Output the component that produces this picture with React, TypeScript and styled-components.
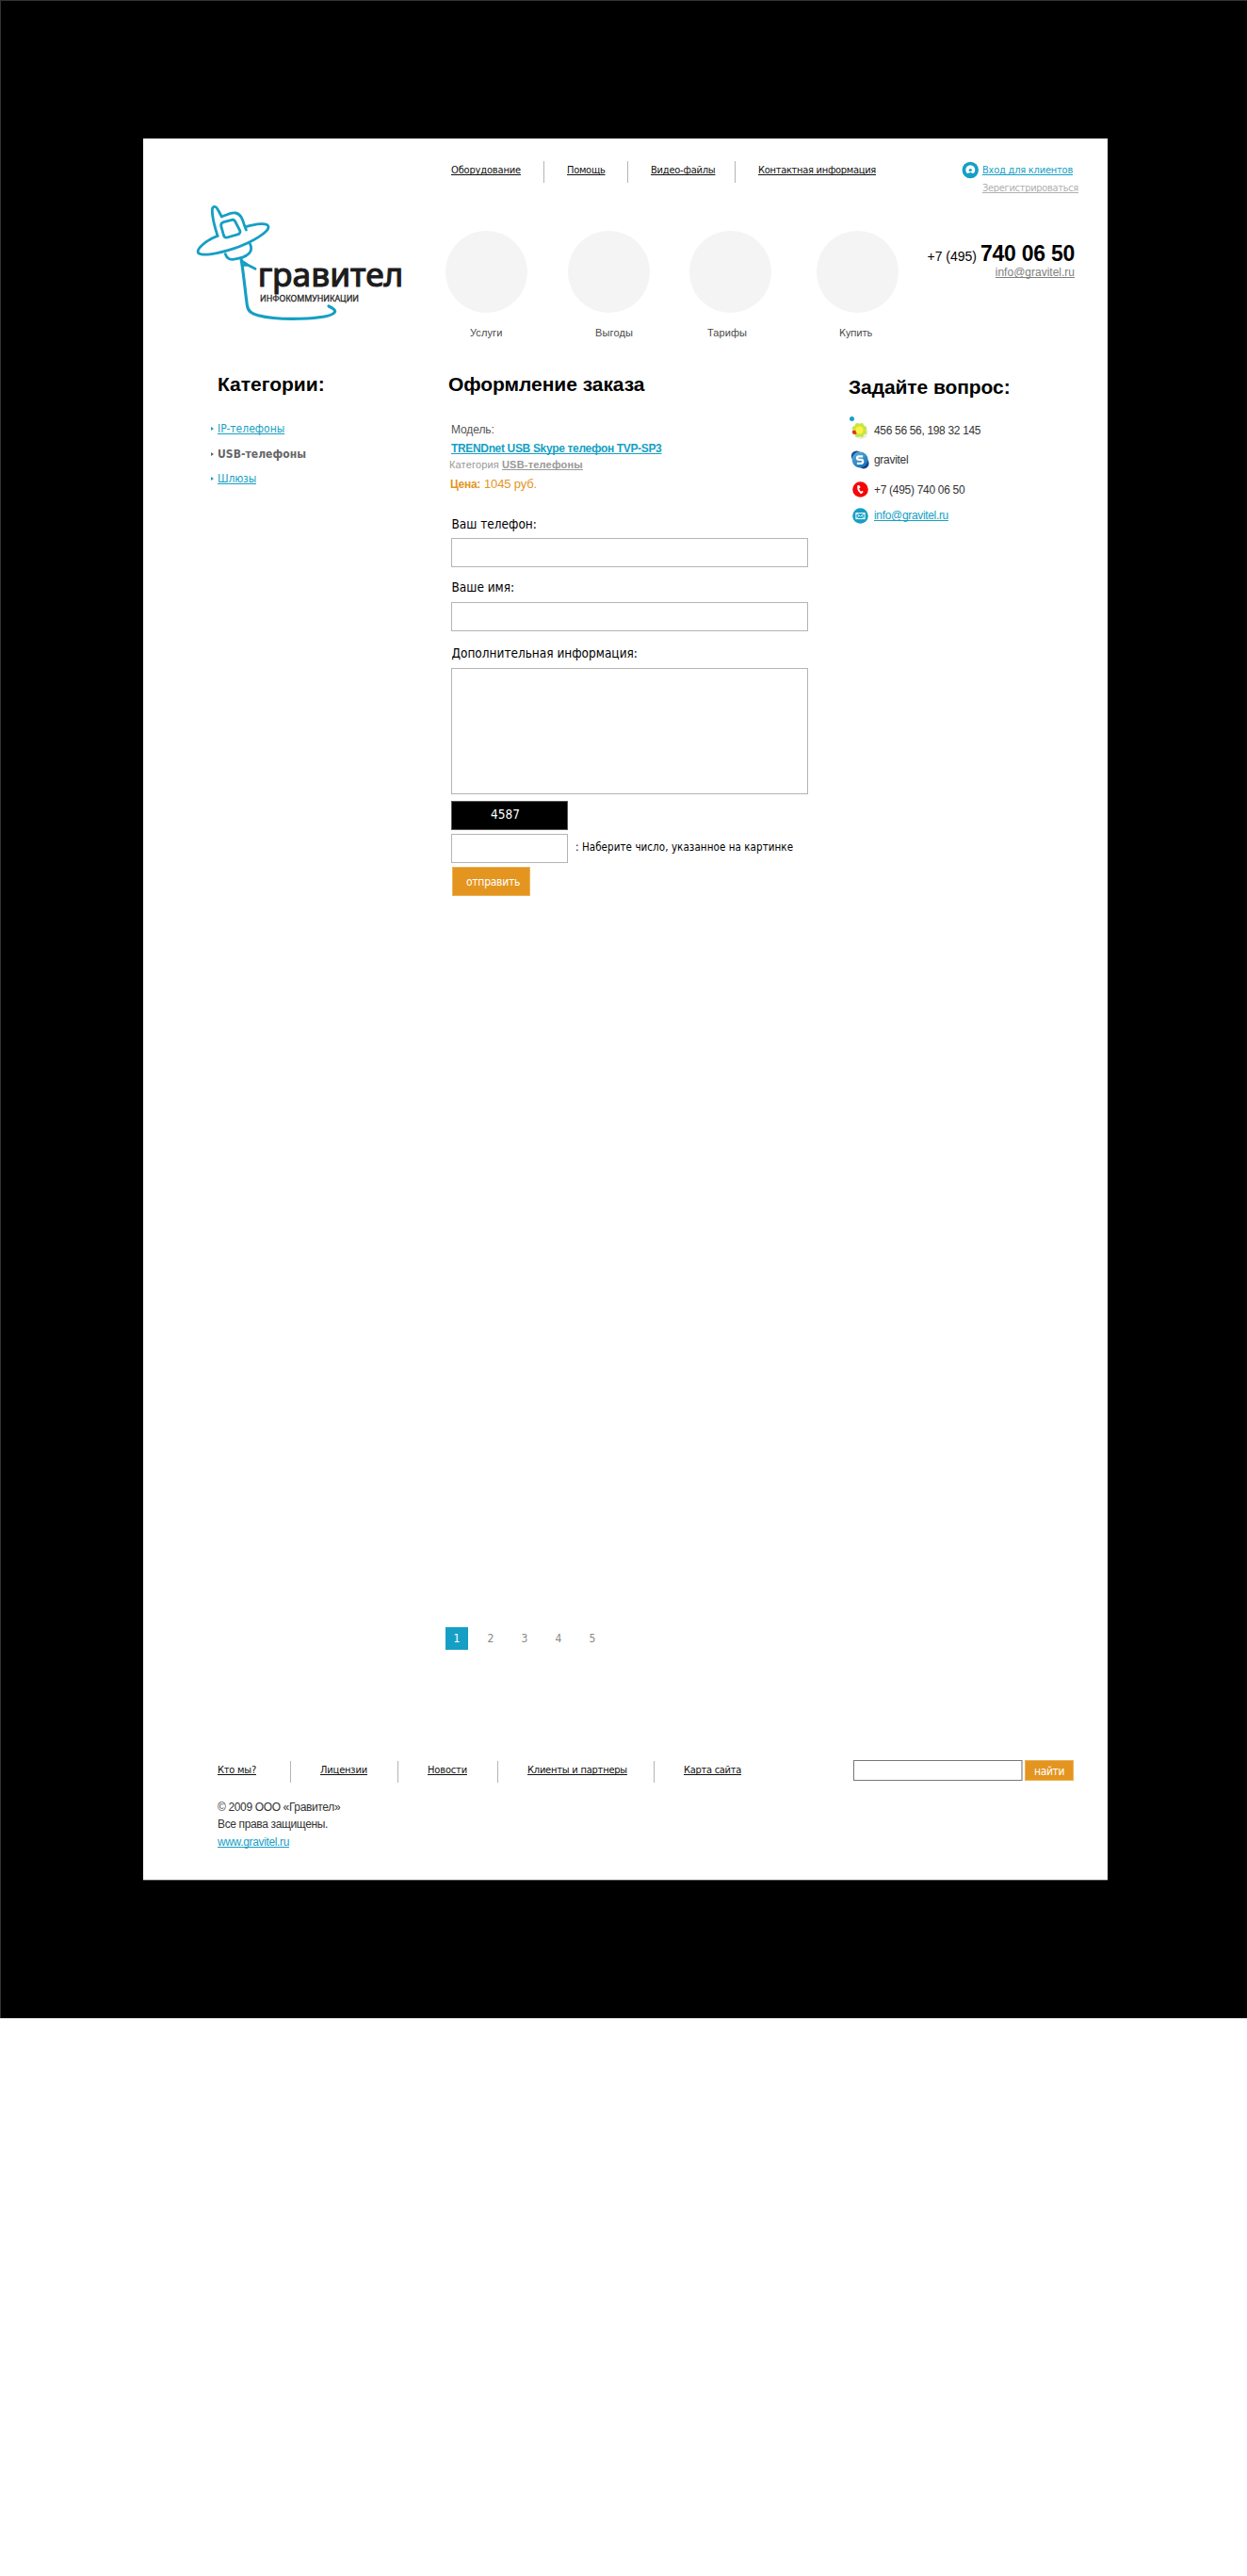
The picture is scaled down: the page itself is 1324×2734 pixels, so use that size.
import React from "react";
import styled, { createGlobalStyle } from "styled-components";

const tahoma = `Tahoma, "DejaVu Sans Condensed", "DejaVu Sans", sans-serif`;
const arial = `"Liberation Sans", Arial, sans-serif`;
const blue = "#169fc4";
const orange = "#e4951f";

const Global = createGlobalStyle`
  * { box-sizing: border-box; }
  html, body { margin: 0; padding: 0; background: #fff; }
  h2, p, ul { margin: 0; padding: 0; }
`;

const Backdrop = styled.div`
  width: 1324px;
  height: 2142px;
  padding: 146px 0 0 151px;
  background: #000;
  border: 1px solid #333;
  border-right: 0;
  border-bottom: 0;
`;

const Sheet = styled.div`
  width: 1024px;
  height: 1849px;
  background: #fff;
  border-bottom: 1px solid #555;
  font-family: ${arial};
  white-space: nowrap;
  display: flex;
  flex-direction: column;
`;

const Link = styled.a<{ $ls?: number }>`
  color: inherit;
  text-decoration: underline;
  text-decoration-thickness: 1px;
  text-underline-offset: 1px;
  text-decoration-skip-ink: none;
  letter-spacing: ${(p) => p.$ls ?? 0}px;
`;

/* ---------- top bar ---------- */

const TopBar = styled.div`
  display: flex;
  height: 62px;
  padding: 24px 0 0 327px;
  font: 11px/19px ${tahoma};
`;

const NavCell = styled.div<{ $w: number; $pad: number; $last?: boolean }>`
  width: ${(p) => p.$w}px;
  height: 23px;
  padding-left: ${(p) => p.$pad}px;
  color: #111;
  border-right: ${(p) => (p.$last ? "0" : "1px solid #b4b4b4")};
`;

const Login = styled.div`
  display: flex;
  gap: 3px;
  padding-left: 1px;
`;

const LoginLinks = styled.div`
  display: flex;
  flex-direction: column;
  color: ${blue};
`;

const Register = styled.span`
  color: #b0b0b0;
`;

/* ---------- header ---------- */

const Header = styled.div`
  display: flex;
  height: 185px;
  padding-left: 55px;
`;

const LogoSvg = styled.svg`
  display: block;
  flex: none;
  width: 225px;
  height: 130px;
  margin: 6px 41px 0 0;
  overflow: visible;
`;

const Section = styled.div<{ $gap: number }>`
  width: 87px;
  margin: 36px ${(p) => p.$gap}px 0 0;
  flex: none;
`;

const Disc = styled.div`
  height: 87px;
  border-radius: 50%;
  background: #f4f4f4;
`;

const SectionName = styled.div<{ $left: number; $ls: number; $tahoma?: boolean }>`
  margin-top: ${(p) => (p.$tahoma ? 12 : 11)}px;
  padding-left: ${(p) => p.$left}px;
  font: 11px/20px ${(p) => (p.$tahoma ? tahoma : arial)};
  letter-spacing: ${(p) => p.$ls}px;
  color: #4a4a4a;
`;

const Phone = styled.div`
  width: 157px;
  margin: 47px 0 0 30px;
  display: flex;
  flex-direction: column;
  align-items: flex-end;
`;

const PhoneLine = styled.div`
  display: flex;
  align-items: baseline;
  gap: 4px;
  height: 26px;
  font-size: 14px;
  line-height: 26px;
`;

const PhoneNumber = styled.strong`
  font-size: 23px;
  letter-spacing: -0.26px;
`;

const PhoneMail = styled.div`
  font-size: 12px;
  line-height: 15px;
  color: #808080;
`;

/* ---------- columns ---------- */

const Columns = styled.div`
  display: flex;
  height: 1333px;
`;

const Column = styled.div<{ $left: number; $w: number; $top?: number }>`
  width: ${(p) => p.$w}px;
  margin-left: ${(p) => p.$left}px;
  padding-top: ${(p) => p.$top ?? 0}px;
  flex: none;
`;

const Title = styled.h2<{ $ls: number; $indent?: number }>`
  font: bold 21px/28px ${arial};
  letter-spacing: ${(p) => p.$ls}px;
  padding-left: ${(p) => p.$indent ?? 0}px;
  color: #000;
`;

const Categories = styled.ul`
  list-style: none;
  margin-top: 20px;
`;

const Category = styled.li<{ $current?: boolean; $ls?: number }>`
  display: flex;
  align-items: center;
  gap: 4px;
  height: 26.5px;
  font: ${(p) => (p.$current ? "bold" : "normal")} 12px/26.5px ${tahoma};
  letter-spacing: ${(p) => p.$ls ?? 0}px;
  color: ${(p) => (p.$current ? "#666" : blue)};
`;

const Arrow = styled.span`
  border-left: 3px solid currentColor;
  border-top: 2px solid transparent;
  border-bottom: 2px solid transparent;
`;

const Product = styled.div`
  padding: 24px 0 0 3px;
`;

const ModelLabel = styled.div`
  font-size: 12px;
  line-height: 20px;
  letter-spacing: -0.1px;
  color: #555;
`;

const ModelName = styled.div`
  font-weight: bold;
  font-size: 12px;
  line-height: 20px;
  color: ${blue};
`;

const ModelCategory = styled.div`
  display: flex;
  gap: 3px;
  margin-left: -2px;
  font-size: 11px;
  line-height: 15px;
  height: 16px;
  letter-spacing: 0.17px;
  color: #999;
`;

const Price = styled.div`
  display: flex;
  align-items: baseline;
  gap: 4px;
  margin-left: -1px;
  height: 24px;
  font-size: 13px;
  line-height: 24px;
  letter-spacing: -0.15px;
  color: ${orange};
`;

const PriceLabel = styled.strong`
  font-size: 12px;
  letter-spacing: -0.3px;
`;

const Form = styled.form`
  width: 382px;
  padding: 20px 0 0 3px;
`;

const FieldLabel = styled.label<{ $top?: number; $gap: number }>`
  display: block;
  margin: ${(p) => p.$top ?? 0}px 0 ${(p) => p.$gap}px;
  padding-left: 0.5px;
  font: 13.5px/20px ${tahoma};
  color: #000;
`;

const Field = styled.input`
  display: block;
  width: 379px;
  height: 31px;
  padding: 0 6px;
  border: 1px solid #b4b4b4;
  background: #fff;
  border-radius: 0;
  outline: 0;
`;

const Area = styled.textarea`
  display: block;
  width: 379px;
  height: 134px;
  padding: 6px;
  border: 1px solid #b4b4b4;
  border-radius: 0;
  resize: none;
  outline: 0;
`;

const Captcha = styled.div`
  width: 124px;
  height: 31px;
  margin: 7px 0 4px;
  padding-left: 41px;
  border: 1px solid #555;
  background: #000;
  color: #fff;
  font: 13.5px/27px ${tahoma};
`;

const CaptchaRow = styled.div`
  display: flex;
  gap: 8px;
  font: 11.5px/29px ${tahoma};
  letter-spacing: 0.07px;
  color: #000;
`;

const CaptchaField = styled(Field)`
  width: 124px;
`;

const Button = styled.button<{ $w: number; $h: number; $left: number; $ls: number }>`
  display: block;
  width: ${(p) => p.$w}px;
  height: ${(p) => p.$h}px;
  padding: 1px 0 0 ${(p) => p.$left}px;
  border: 1px solid #ebb25c;
  background: ${orange};
  color: #fff;
  font: 12px/1 ${tahoma};
  letter-spacing: ${(p) => p.$ls}px;
  text-align: left;
`;

const SubmitRow = styled.div`
  padding: 4px 0 0 1px;
`;

const Contacts = styled.div`
  position: relative;
  padding: 21px 0 0 3px;
`;

const Dot = styled.span`
  position: absolute;
  left: 1px;
  top: 17px;
  width: 5px;
  height: 5px;
  border-radius: 50%;
  background: ${blue};
`;

const Contact = styled.div<{ $h: number; $ls: number }>`
  display: flex;
  align-items: center;
  height: ${(p) => p.$h}px;
  font-size: 12px;
  letter-spacing: ${(p) => p.$ls}px;
  color: #333;
`;

const ContactIcon = styled.span`
  display: flex;
  align-items: center;
  justify-content: center;
  width: 18px;
  margin-right: 6px;
  flex: none;

  svg {
    flex: none;
  }
`;

const Blue = styled.span`
  color: ${blue};
`;

/* ---------- pagination and footer ---------- */

const Pages = styled.div`
  display: flex;
  gap: 12px;
  padding-left: 321px;
  height: 142px;
`;

const Page = styled.span<{ $on?: boolean }>`
  width: 24px;
  height: 24px;
  font: 12px/25px ${tahoma};
  text-align: center;
  color: ${(p) => (p.$on ? "#fff" : "#888")};
  background: ${(p) => (p.$on ? blue : "transparent")};
`;

const Footer = styled.div`
  display: flex;
  padding-left: 79px;
  height: 23px;
  font: 11px/19px ${tahoma};
`;

const Search = styled.div`
  display: flex;
  gap: 2px;
  margin-top: -1px;
`;

const SearchField = styled.input`
  width: 180px;
  height: 22px;
  padding: 0 4px;
  border: 1px solid #777;
  border-right: 2px solid #b4b4b4;
  border-radius: 1px;
  outline: 0;
`;

const Legal = styled.div`
  padding: 17px 0 0 79px;
  font-size: 12px;
  line-height: 18.4px;
  letter-spacing: -0.36px;
  color: #333;
`;

function Logo() {
  return (
    <LogoSvg viewBox="201 240 675 390">
      <g fill="none" stroke={blue} strokeWidth="8.5" strokeLinecap="round" strokeLinejoin="round">
        <path d="M273 346C264 318 255 285 256 262C257 251 267 250 272 259C278 270 282 277 286 285C300 281 314 271 330 273C347 276 352 292 357 308L364 327" />
        <path d="M364 317C395 308 432 302 435 317C437 333 385 366 326 386C275 403 224 411 212 401C203 388 238 359 273 346" />
        <path d="M293 302L319 295Q326 293 329 300L344 329Q347 337 339 341L304 351Q296 353 293 346L284 314Q283 305 293 302Z" />
        <path d="M298 404C301 414 309 422 322 421C341 418 359 416 374 401C383 391 381 382 377 373" />
        <path d="M348 420C353 442 361 522 367 566C370 588 383 594 402 599C440 609 500 612 560 609C605 606 644 600 647 587C647 579 636 574 627 570" strokeWidth="9.5" />
        <path d="M350 426L368 438L393 451M352 440L368 438" />
      </g>
      <text x="401" y="508" fontFamily="Noto Sans, sans-serif" fontSize="106" fill="#1c1c1c" stroke="#1c1c1c" strokeWidth="3.5" textLength="464" lengthAdjust="spacingAndGlyphs">
        гравител
      </text>
      <text x="408" y="555" fontFamily="Noto Sans, sans-serif" fontSize="26" fill="#1c1c1c" stroke="#1c1c1c" strokeWidth="0.8" textLength="315" lengthAdjust="spacingAndGlyphs">
        ИНФОКОММУНИКАЦИИ
      </text>
    </LogoSvg>
  );
}

function UserIcon() {
  return (
    <svg width="19" height="19" viewBox="0 0 19 19">
      <circle cx="9.3" cy="9.5" r="8.7" fill={blue} />
      <path d="M5.9 13A5 5 0 1 1 12.7 13" fill="#fff" />
      <circle cx="9.3" cy="9.5" r="1.6" fill={blue} />
      <path d="M6.8 14.3Q7 12 9.3 12T11.8 14.3Z" fill={blue} />
    </svg>
  );
}

function FlowerIcon() {
  const petals = [0, 1, 2, 3, 4, 5, 6, 7];
  return (
    <svg width="20" height="20" viewBox="0 0 20 20">
      <circle cx="10.9" cy="11.2" r="7.8" fill="#e4e4e4" opacity="0.7" />
      {petals.map((i) => {
        const a = (i * Math.PI) / 4 + 0.39;
        return (
          <circle
            key={i}
            cx={9.5 + 5.5 * Math.cos(a)}
            cy={9.5 + 5.5 * Math.sin(a)}
            r="2.5"
            fill={i === 3 ? "#d8381c" : "#c4e640"}
          />
        );
      })}
      <circle cx="9.5" cy="9.5" r="4" fill="#fff044" />
    </svg>
  );
}

function SkypeIcon() {
  return (
    <svg width="20" height="20" viewBox="0 0 20 20">
      <defs>
        <linearGradient id="skype" x1="0" y1="0" x2="0.6" y2="1">
          <stop offset="0" stopColor="#5fb4de" />
          <stop offset="1" stopColor="#1b74b4" />
        </linearGradient>
      </defs>
      <circle cx="6.4" cy="6" r="5.6" fill="#1c4f94" />
      <circle cx="14" cy="13.8" r="5.6" fill="#153f8e" />
      <circle cx="10.1" cy="10" r="8.5" fill="url(#skype)" />
      <path
        d="M13.2 6.3H9Q7 6.3 7 8.1T9 9.9H11.3Q13.2 9.9 13.2 11.8T11.3 13.8H6.9"
        fill="none"
        stroke="#fff"
        strokeWidth="2.3"
      />
    </svg>
  );
}

function PhoneIcon() {
  return (
    <svg width="17" height="17" viewBox="0 0 17 17">
      <circle cx="8.5" cy="8.5" r="8.3" fill="#f60606" />
      <path d="M6.6 4.6C5.3 6.6 6.6 10.6 9.7 12.2" fill="none" stroke="#fff" strokeWidth="1.9" />
      <path d="M6.5 4.9L7.5 6.1M9.3 12L10.5 11" stroke="#fff" strokeWidth="2" strokeLinecap="round" />
    </svg>
  );
}

function MailIcon() {
  return (
    <svg width="17" height="17" viewBox="0 0 17 17">
      <circle cx="8.5" cy="8.5" r="8.3" fill={blue} />
      <rect x="3.9" y="5.6" width="9.2" height="6" fill="none" stroke="#fff" />
      <path d="M4 5.8L8.5 9.2L13 5.8M4 11.5L7.2 8.4M13 11.5L9.8 8.4" fill="none" stroke="#fff" strokeWidth="0.9" />
    </svg>
  );
}

const topNav = [
  { text: "Оборудование", w: 99, pad: 0, ls: -0.16 },
  { text: "Помощь", w: 89, pad: 24, ls: -0.28 },
  { text: "Видео-файлы", w: 114, pad: 24, ls: -0.22 },
  { text: "Контактная информация", w: 239, pad: 24, ls: -0.29 },
];

const sections = [
  { text: "Услуги", left: 26, gap: 43, ls: 0.11 },
  { text: "Выгоды", left: 29, gap: 42, ls: 0.13 },
  { text: "Тарифы", left: 19, gap: 48, ls: 0.07 },
  { text: "Купить", left: 24, gap: 0, ls: -0.4, tahoma: true },
];

const footerNav = [
  { text: "Кто мы?", w: 78, pad: 0, ls: -0.22 },
  { text: "Лицензии", w: 114, pad: 31, ls: -0.16 },
  { text: "Новости", w: 106, pad: 31, ls: -0.15 },
  { text: "Клиенты и партнеры", w: 166, pad: 31, ls: -0.22 },
  { text: "Карта сайта", w: 211, pad: 31, ls: -0.28 },
];

export default function App() {
  return (
    <>
      <Global />
      <Backdrop>
        <Sheet>
          <TopBar>
            {topNav.map((n, i) => (
              <NavCell key={n.text} $w={n.w} $pad={n.pad} $last={i === topNav.length - 1}>
                <Link $ls={n.ls}>{n.text}</Link>
              </NavCell>
            ))}
            <Login>
              <UserIcon />
              <LoginLinks>
                <Link $ls={-0.23}>Вход для клиентов</Link>
                <Register>
                  <Link $ls={-0.31}>Зерегистрироваться</Link>
                </Register>
              </LoginLinks>
            </Login>
          </TopBar>

          <Header>
            <Logo />
            {sections.map((s) => (
              <Section key={s.text} $gap={s.gap}>
                <Disc />
                <SectionName $left={s.left} $ls={s.ls} $tahoma={s.tahoma}>
                  {s.text}
                </SectionName>
              </Section>
            ))}
            <Phone>
              <PhoneLine>
                <span>+7 (495)</span>
                <PhoneNumber>740 06 50</PhoneNumber>
              </PhoneLine>
              <PhoneMail>
                <Link>info@gravitel.ru</Link>
              </PhoneMail>
            </Phone>
          </Header>

          <Columns>
            <Column $left={72} $w={200}>
              <Title $ls={0} $indent={7}>Категории:</Title>
              <Categories>
                <Category>
                  <Arrow />
                  <Link>IP-телефоны</Link>
                </Category>
                <Category $current $ls={0.05}>
                  <Arrow />
                  USB-телефоны
                </Category>
                <Category>
                  <Arrow />
                  <Link $ls={-0.16}>Шлюзы</Link>
                </Category>
              </Categories>
            </Column>

            <Column $left={52} $w={400}>
              <Title $ls={-0.05}>Оформление заказа</Title>
              <Product>
                <ModelLabel>Модель:</ModelLabel>
                <ModelName>
                  <Link $ls={-0.34}>TRENDnet USB Skype телефон TVP-SP3</Link>
                </ModelName>
                <ModelCategory>
                  <span>Категория</span>
                  <b>
                    <Link $ls={0.2}>USB-телефоны</Link>
                  </b>
                </ModelCategory>
                <Price>
                  <PriceLabel>Цена:</PriceLabel>
                  <span>1045 руб.</span>
                </Price>
              </Product>
              <Form>
                <FieldLabel $gap={5}>Ваш телефон:</FieldLabel>
                <Field />
                <FieldLabel $top={11} $gap={6}>Ваше имя:</FieldLabel>
                <Field />
                <FieldLabel $top={13} $gap={6}>Дополнительная информация:</FieldLabel>
                <Area />
                <Captcha>4587</Captcha>
                <CaptchaRow>
                  <CaptchaField />
                  <span>: Наберите число, указанное на картинке</span>
                </CaptchaRow>
                <SubmitRow>
                  <Button type="button" $w={83} $h={31} $left={14} $ls={-0.27}>отправить</Button>
                </SubmitRow>
              </Form>
            </Column>

            <Column $left={25} $w={240} $top={2.5}>
              <Title $ls={-0.08}>Задайте вопрос:</Title>
              <Contacts>
                <Dot />
                <Contact $h={22} $ls={-0.33}>
                  <ContactIcon><FlowerIcon /></ContactIcon>
                  456 56 56, 198 32 145
                </Contact>
                <Contact $h={41} $ls={-0.3}>
                  <ContactIcon><SkypeIcon /></ContactIcon>
                  gravitel
                </Contact>
                <Contact $h={22} $ls={-0.3}>
                  <ContactIcon><PhoneIcon /></ContactIcon>
                  +7 (495) 740 06 50
                </Contact>
                <Contact $h={33} $ls={0}>
                  <ContactIcon><MailIcon /></ContactIcon>
                  <Blue>
                    <Link $ls={-0.33}>info@gravitel.ru</Link>
                  </Blue>
                </Contact>
              </Contacts>
            </Column>
          </Columns>

          <Pages>
            {[1, 2, 3, 4, 5].map((n) => (
              <Page key={n} $on={n === 1}>{n}</Page>
            ))}
          </Pages>

          <Footer>
            {footerNav.map((n, i) => (
              <NavCell key={n.text} $w={n.w} $pad={n.pad} $last={i === footerNav.length - 1}>
                <Link $ls={n.ls}>{n.text}</Link>
              </NavCell>
            ))}
            <Search>
              <SearchField />
              <Button type="button" $w={52} $h={22} $left={9} $ls={-0.4}>найти</Button>
            </Search>
          </Footer>
          <Legal>
            <p>© 2009 ООО «Гравител»</p>
            <p>Все права защищены.</p>
            <p>
              <Blue>
                <Link $ls={-0.36}>www.gravitel.ru</Link>
              </Blue>
            </p>
          </Legal>
        </Sheet>
      </Backdrop>
    </>
  );
}
